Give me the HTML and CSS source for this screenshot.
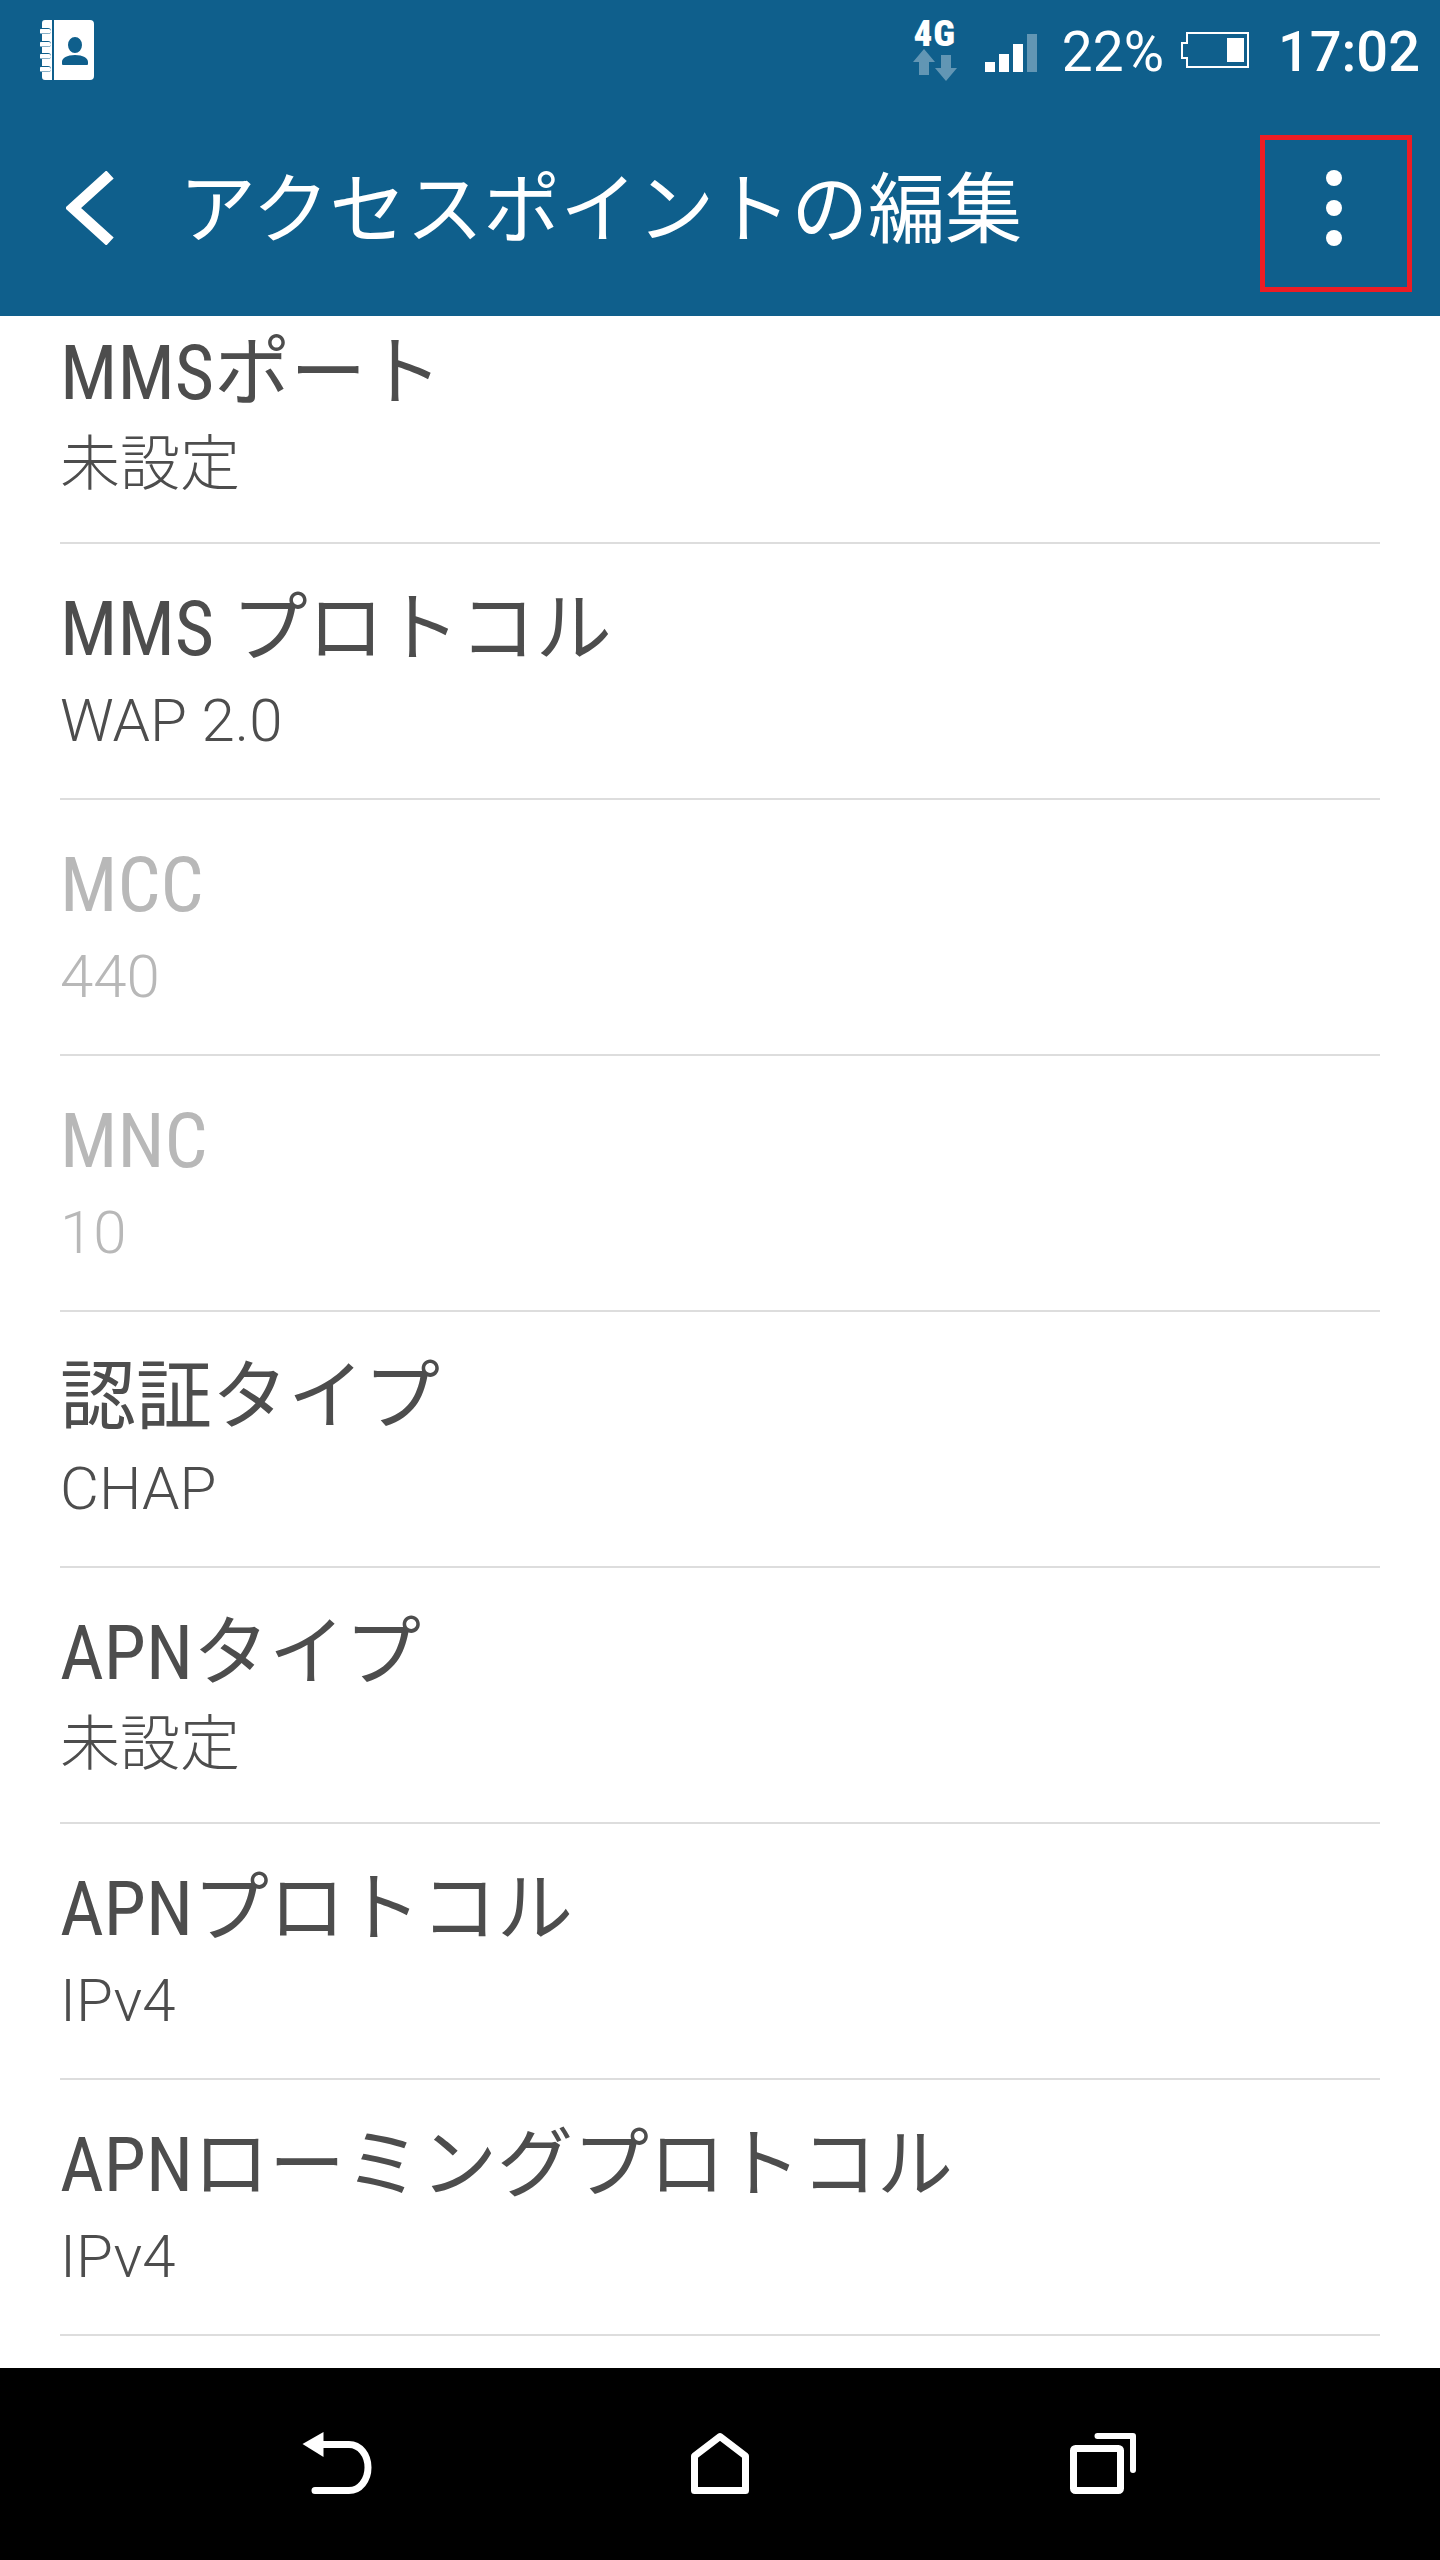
FILE: index.html
```html
<!DOCTYPE html>
<html lang="ja">
<head>
    <meta charset="UTF-8">
    <meta name="viewport" content="width=device-width, initial-scale=1.0">
    <title>アクセスポイントの編集</title>
    <link rel="stylesheet" href="styles.css">
</head>
<body>
    <div class="screen">
        <header class="app-header">
            <!-- Status bar -->
            <div class="status-bar">
                <svg class="contacts-icon" width="54" height="60" viewBox="0 0 54 60">
                    <path fill="#fff" d="M5 0H12V60H5A3 3 0 0 1 2 57V52H8A3 3 0 0 0 8 46H2V39H8A3 3 0 0 0 8 33H2V27H8A3 3 0 0 0 8 21H2V14H8A3 3 0 0 0 8 8H2V3A3 3 0 0 1 5 0Z"/>
                    <rect x="-1" y="9" width="12" height="4.5" rx="2.2" fill="#fff"/>
                    <rect x="-1" y="22" width="12" height="4.5" rx="2.2" fill="#fff"/>
                    <rect x="-1" y="34" width="12" height="4.5" rx="2.2" fill="#fff"/>
                    <rect x="-1" y="47" width="12" height="4.5" rx="2.2" fill="#fff"/>
                    <path fill="#fff" fill-rule="evenodd" d="M14 0H50A4 4 0 0 1 54 4V56A4 4 0 0 1 50 60H14ZM35 17A7 8 0 1 0 35 33A7 8 0 1 0 35 17ZM35 35C27 35 22 38 22 42V44A1 1 0 0 0 23 45H47A1 1 0 0 0 48 44V42C48 38 43 35 35 35Z"/>
                </svg>
                <div class="status-right">
                    <div class="network">
                        <span class="network-type">4G</span>
                        <svg width="44" height="32" viewBox="0 0 44 32">
                            <path fill="#fff" opacity=".35" d="M11 0L22 13H16V26H6V13H0ZM28 6H38V19H44L33 32L22 19H28Z"/>
                        </svg>
                    </div>
                    <svg class="signal" width="52" height="38" viewBox="0 0 52 38">
                        <rect x="0" y="28" width="10" height="10" fill="#fff"/>
                        <rect x="14" y="20" width="10" height="18" fill="#fff"/>
                        <rect x="28" y="10" width="10" height="28" fill="#fff"/>
                        <rect x="42" y="0" width="10" height="38" fill="#fff" opacity=".35"/>
                    </svg>
                    <span class="battery-level">22%</span>
                    <svg class="battery" width="68" height="36" viewBox="0 0 68 36">
                        <path fill="none" stroke="#fff" stroke-width="2" d="M6 1H67V35H6V26H1V11H6Z"/>
                        <rect x="46" y="6" width="17" height="24" fill="#fff"/>
                    </svg>
                    <span class="clock">17:02</span>
                </div>
            </div>

            <!-- Toolbar -->
            <div class="toolbar">
                <svg class="back-icon" width="48" height="74" viewBox="0 0 48 74">
                    <path fill="none" stroke="#fff" stroke-width="11" d="M44 3.5L7 37L44 70.5"/>
                </svg>
                <h1 class="page-title">アクセスポイントの編集</h1>
                <div class="more-btn">
                    <span class="dot"></span>
                    <span class="dot"></span>
                    <span class="dot"></span>
                </div>
            </div>
        </header>

        <main class="settings">
            <div class="settings-list">
                <div class="row">
                    <div class="row-title">MMSポート</div>
                    <div class="row-value">未設定</div>
                </div>
                <div class="row">
                    <div class="row-title">MMS プロトコル</div>
                    <div class="row-value">WAP 2.0</div>
                </div>
                <div class="row disabled">
                    <div class="row-title">MCC</div>
                    <div class="row-value">440</div>
                </div>
                <div class="row disabled">
                    <div class="row-title">MNC</div>
                    <div class="row-value">10</div>
                </div>
                <div class="row">
                    <div class="row-title">認証タイプ</div>
                    <div class="row-value">CHAP</div>
                </div>
                <div class="row">
                    <div class="row-title">APNタイプ</div>
                    <div class="row-value">未設定</div>
                </div>
                <div class="row">
                    <div class="row-title">APNプロトコル</div>
                    <div class="row-value">IPv4</div>
                </div>
                <div class="row">
                    <div class="row-title">APNローミングプロトコル</div>
                    <div class="row-value">IPv4</div>
                </div>
            </div>
        </main>

        <!-- Navigation buttons -->
        <nav class="nav-bar">
            <svg width="80" height="80" viewBox="0 0 80 80">
                <path fill="#fff" d="M5.500 14L26.500 2V27Z"/>
                <path fill="none" stroke="#fff" stroke-width="7" stroke-linecap="round" d="M24 14.500H52C63 14.500 71 25 71 37.500C71 50 63 60.500 52 60.500H18"/>
            </svg>
            <svg width="80" height="80" viewBox="0 0 80 80">
                <path fill="none" stroke="#fff" stroke-width="7" stroke-linejoin="round" d="M14.500 26L40 6.500L65.500 26V60.500H14.500Z"/>
            </svg>
            <svg width="80" height="80" viewBox="0 0 80 80">
                <rect x="10.500" y="18.500" width="47" height="42" rx="2" fill="none" stroke="#fff" stroke-width="7"/>
                <path fill="none" stroke="#fff" stroke-width="6" stroke-linecap="round" stroke-linejoin="round" d="M34.500 6H70V40"/>
            </svg>
        </nav>
    </div>
</body>
</html>
```

FILE: styles.css
```css
/* General Styling */
body {
    margin: 0;
    padding: 0;
    overflow: hidden;
    font-family: Roboto, "Noto Sans CJK JP", sans-serif;
}

.screen {
    display: flex;
    flex-direction: column;
    width: 1440px;
    height: 2560px;
    background: #fff;
}

/* Header */
.app-header {
    height: 316px;
    flex-shrink: 0;
    background: #0f5f8c;
    color: #fff;
}

.status-bar {
    display: flex;
    justify-content: space-between;
    height: 111px;
    padding: 20px 20px 0 40px;
    box-sizing: border-box;
}

.status-right {
    display: flex;
    align-items: flex-start;
}

.network {
    display: flex;
    flex-direction: column;
    align-items: center;
    width: 44px;
}

.network-type {
    font-size: 37px;
    font-weight: 900;
    font-stretch: 75%;
    line-height: 27px;
    letter-spacing: 1px;
}

.network svg {
    margin-top: 2px;
}

.signal {
    margin: 14px 0 0 28px;
}

.battery-level {
    margin-left: 25px;
    font-size: 55px;
    line-height: 64px;
}

.battery {
    margin: 12px 0 0 17px;
}

.clock {
    margin-left: 29px;
    font-size: 56px;
    font-weight: 500;
    line-height: 64px;
}

.toolbar {
    display: flex;
    align-items: center;
    height: 205px;
    padding: 0 28px 0 66px;
}

.back-icon {
    flex-shrink: 0;
    margin-bottom: 11px;
}

.page-title {
    flex: 1;
    margin: 0 0 6px 65px;
    font-size: 77px;
    font-weight: 400;
    line-height: 100px;
    white-space: nowrap;
}

.more-btn {
    display: flex;
    flex-direction: column;
    align-items: center;
    justify-content: center;
    gap: 14px;
    width: 152px;
    height: 157px;
    box-sizing: border-box;
    padding: 0 4px 11px 0;
    border: 5px solid #ed1c24;
}

.dot {
    width: 16px;
    height: 16px;
    border-radius: 50%;
    background: #fff;
}

/* Settings list */
.settings {
    flex: 1;
    overflow: hidden;
}

.settings-list {
    margin-top: -28px;
    padding: 0 60px;
}

.row {
    height: 256px;
    box-sizing: border-box;
    padding-top: 40px;
    border-bottom: 2px solid #ddd;
    color: #4d4d4d;
}

.row.disabled {
    color: #b8b8b8;
}

.row-title {
    font-size: 76px;
    font-stretch: 75%;
    line-height: 90px;
    white-space: nowrap;
}

.row-value {
    margin-top: 2px;
    font-size: 60px;
    font-weight: 300;
    line-height: 90px;
    white-space: nowrap;
}

/* Navigation bar */
.nav-bar {
    display: flex;
    justify-content: center;
    gap: 303px;
    height: 192px;
    flex-shrink: 0;
    padding-top: 62px;
    box-sizing: border-box;
    background: #000;
}
```
